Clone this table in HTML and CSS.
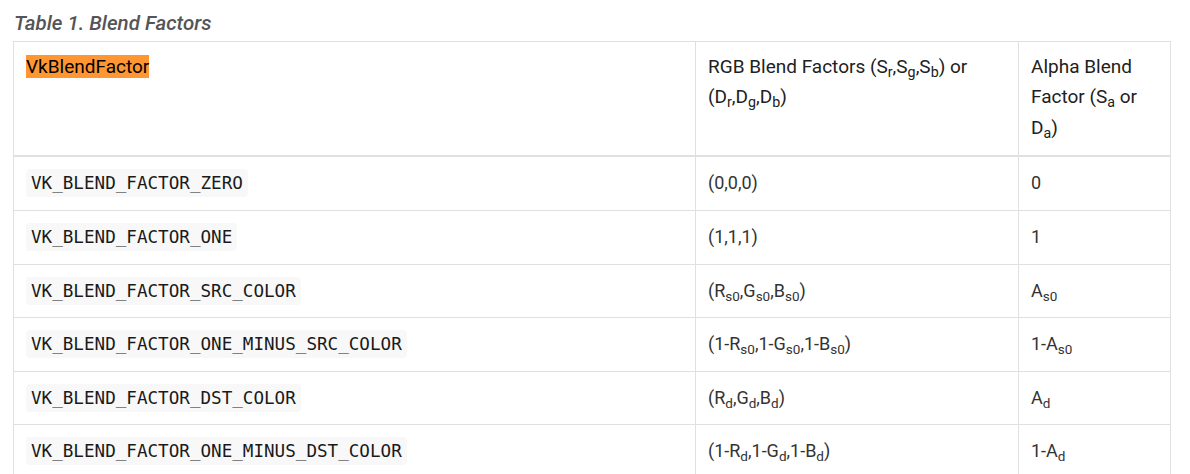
FILE: index.html
```html
<!DOCTYPE html>
<html>
<head>
<meta charset="utf-8">
<link rel="stylesheet" href="styles.css">
</head>
<body>
<div class="page">
  <table class="blend">
    <caption class="title">Table 1. Blend Factors</caption>
    <colgroup>
      <col class="c1">
      <col class="c2">
      <col class="c3">
    </colgroup>
    <thead>
      <tr>
        <th><mark class="hit">VkBlendFactor</mark></th>
        <th>RGB Blend Factors (S<sub>r</sub>,S<sub>g</sub>,S<sub>b</sub>) or (D<sub>r</sub>,D<sub>g</sub>,D<sub>b</sub>)</th>
        <th>Alpha Blend Factor (S<sub>a</sub> or D<sub>a</sub>)</th>
      </tr>
    </thead>
    <tbody>
      <tr>
        <td><code>VK_BLEND_FACTOR_ZERO</code></td>
        <td>(0,0,0)</td>
        <td>0</td>
      </tr>
      <tr>
        <td><code>VK_BLEND_FACTOR_ONE</code></td>
        <td>(1,1,1)</td>
        <td>1</td>
      </tr>
      <tr>
        <td><code>VK_BLEND_FACTOR_SRC_COLOR</code></td>
        <td>(R<sub>s0</sub>,G<sub>s0</sub>,B<sub>s0</sub>)</td>
        <td>A<sub>s0</sub></td>
      </tr>
      <tr>
        <td><code>VK_BLEND_FACTOR_ONE_MINUS_SRC_COLOR</code></td>
        <td>(1-R<sub>s0</sub>,1-G<sub>s0</sub>,1-B<sub>s0</sub>)</td>
        <td>1-A<sub>s0</sub></td>
      </tr>
      <tr>
        <td><code>VK_BLEND_FACTOR_DST_COLOR</code></td>
        <td>(R<sub>d</sub>,G<sub>d</sub>,B<sub>d</sub>)</td>
        <td>A<sub>d</sub></td>
      </tr>
      <tr>
        <td><code>VK_BLEND_FACTOR_ONE_MINUS_DST_COLOR</code></td>
        <td>(1-R<sub>d</sub>,1-G<sub>d</sub>,1-B<sub>d</sub>)</td>
        <td>1-A<sub>d</sub></td>
      </tr>
      <tr>
        <td><code>VK_BLEND_FACTOR_SRC_ALPHA</code></td>
        <td>(A<sub>s0</sub>,A<sub>s0</sub>,A<sub>s0</sub>)</td>
        <td>A<sub>s0</sub></td>
      </tr>
    </tbody>
  </table>
</div>
</body>
</html>
```

FILE: styles.css
```css
html, body {
  margin: 0;
  padding: 0;
  background: #ffffff;
}

body {
  font-family: Roboto, "Liberation Sans", sans-serif;
  font-size: 18px;
  line-height: 30.6px;
  color: #333333;
  overflow: hidden;
}

.page {
  padding: 8px 0 0 13px;
}

.blend {
  width: 1157px;
  border-collapse: collapse;
  table-layout: fixed;
  border: 1px solid #e0e0e0;
}

.title {
  caption-side: top;
  text-align: left;
  font-style: italic;
  font-weight: 500;
  font-size: 20.5px;
  color: #555555;
  padding: 0 0 2px 1px;
  border: none;
}

.c1 { width: 682px; }
.c2 { width: 323px; }
.c3 { width: 152px; }

.blend th,
.blend td {
  border: 1px solid #e0e0e0;
  text-align: left;
  padding: 10px 12px;
}

.blend th {
  vertical-align: top;
  font-weight: 400;
  font-size: 19px;
  color: #212121;
  padding: 10px 12px 12px;
  border-bottom: 2px solid #e0e0e0;
}

.blend td {
  vertical-align: middle;
  padding: 11px 12px;
}

.hit {
  background: #ff9632;
  color: #000000;
}

sub {
  font-size: 75%;
  line-height: 0;
  vertical-align: -0.3em;
}

code {
  font-family: "DejaVu Sans Mono", "Liberation Mono", monospace;
  font-size: 17.6px;
  color: #1a1a1a;
  background: #f8f8f8;
  border-radius: 4px;
  padding: 4px 5px;
}
```
